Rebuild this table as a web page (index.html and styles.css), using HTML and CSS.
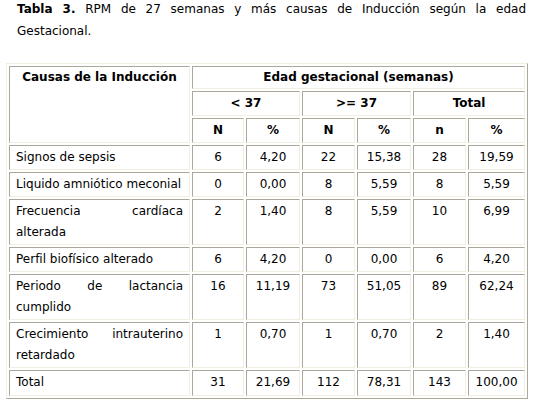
FILE: index.html
```html
<!DOCTYPE html>
<html lang="es">
<head>
<meta charset="utf-8">
<title>Tabla 3</title>
<link rel="stylesheet" href="styles.css">
</head>
<body>
<div class="page">
  <p class="caption"><b>Tabla 3.</b> RPM de 27 semanas y más causas de Inducción según la edad Gestacional.</p>
  <table class="data">
    <colgroup>
      <col class="c-cause">
      <col class="c-n1"><col class="c-p1"><col class="c-n2"><col class="c-p2"><col class="c-n3"><col class="c-p3">
    </colgroup>
    <thead>
      <tr class="h1">
        <th rowspan="3" class="cause-head">Causas de la Inducción</th>
        <th colspan="6">Edad gestacional (semanas)</th>
      </tr>
      <tr class="h2">
        <th colspan="2">&lt; 37</th>
        <th colspan="2">&gt;= 37</th>
        <th colspan="2">Total</th>
      </tr>
      <tr class="h3">
        <th>N</th><th>%</th><th>N</th><th>%</th><th>n</th><th>%</th>
      </tr>
    </thead>
    <tbody>
      <tr><td class="cause">Signos de sepsis</td><td>6</td><td>4,20</td><td>22</td><td>15,38</td><td>28</td><td>19,59</td></tr>
      <tr><td class="cause">Liquido amniótico meconial</td><td>0</td><td>0,00</td><td>8</td><td>5,59</td><td>8</td><td>5,59</td></tr>
      <tr><td class="cause">Frecuencia cardíaca alterada</td><td>2</td><td>1,40</td><td>8</td><td>5,59</td><td>10</td><td>6,99</td></tr>
      <tr><td class="cause">Perfil biofísico alterado</td><td>6</td><td>4,20</td><td>0</td><td>0,00</td><td>6</td><td>4,20</td></tr>
      <tr><td class="cause">Periodo de lactancia cumplido</td><td>16</td><td>11,19</td><td>73</td><td>51,05</td><td>89</td><td>62,24</td></tr>
      <tr><td class="cause">Crecimiento intrauterino retardado</td><td>1</td><td>0,70</td><td>1</td><td>0,70</td><td>2</td><td>1,40</td></tr>
      <tr class="total"><td class="cause">Total</td><td>31</td><td>21,69</td><td>112</td><td>78,31</td><td>143</td><td>100,00</td></tr>
    </tbody>
  </table>
</div>
</body>
</html>
```

FILE: styles.css
```css
html, body {
  margin: 0;
  padding: 0;
  background: #ffffff;
}

.page {
  padding: 0 8px 0 6px;
  font-family: "DejaVu Sans", Verdana, sans-serif;
  font-size: 12px;
  color: #000000;
}

.caption {
  margin: -2px 2px 21px 11px;
  line-height: 22px;
  text-align: justify;
}

.caption b {
  font-weight: bold;
}

.data {
  width: 522px;
  table-layout: fixed;
  border-collapse: separate;
  border-spacing: 2px;
  border: 1px solid;
  border-color: #f1efe2 #aca899 #aca899 #f1efe2;
  font-size: 12px;
  line-height: 21px;
}

.c-cause { width: 181px; }
.c-n1 { width: 52px; }
.c-p1 { width: 54px; }
.c-n2 { width: 53px; }
.c-p2 { width: 54px; }
.c-n3 { width: 53px; }
.c-p3 { width: 57px; }

.data th,
.data td {
  box-sizing: border-box;
  border: 1px solid;
  border-color: #aca899 #f1efe2 #f1efe2 #aca899;
  padding: 1px 6px;
  text-align: center;
  vertical-align: top;
  overflow: hidden;
}

.data th {
  font-weight: bold;
}

.data .h1 th {
  padding: 0 6px;
}

.data td.cause {
  text-align: justify;
}

.data .total td {
  padding-bottom: 2px;
}
```
